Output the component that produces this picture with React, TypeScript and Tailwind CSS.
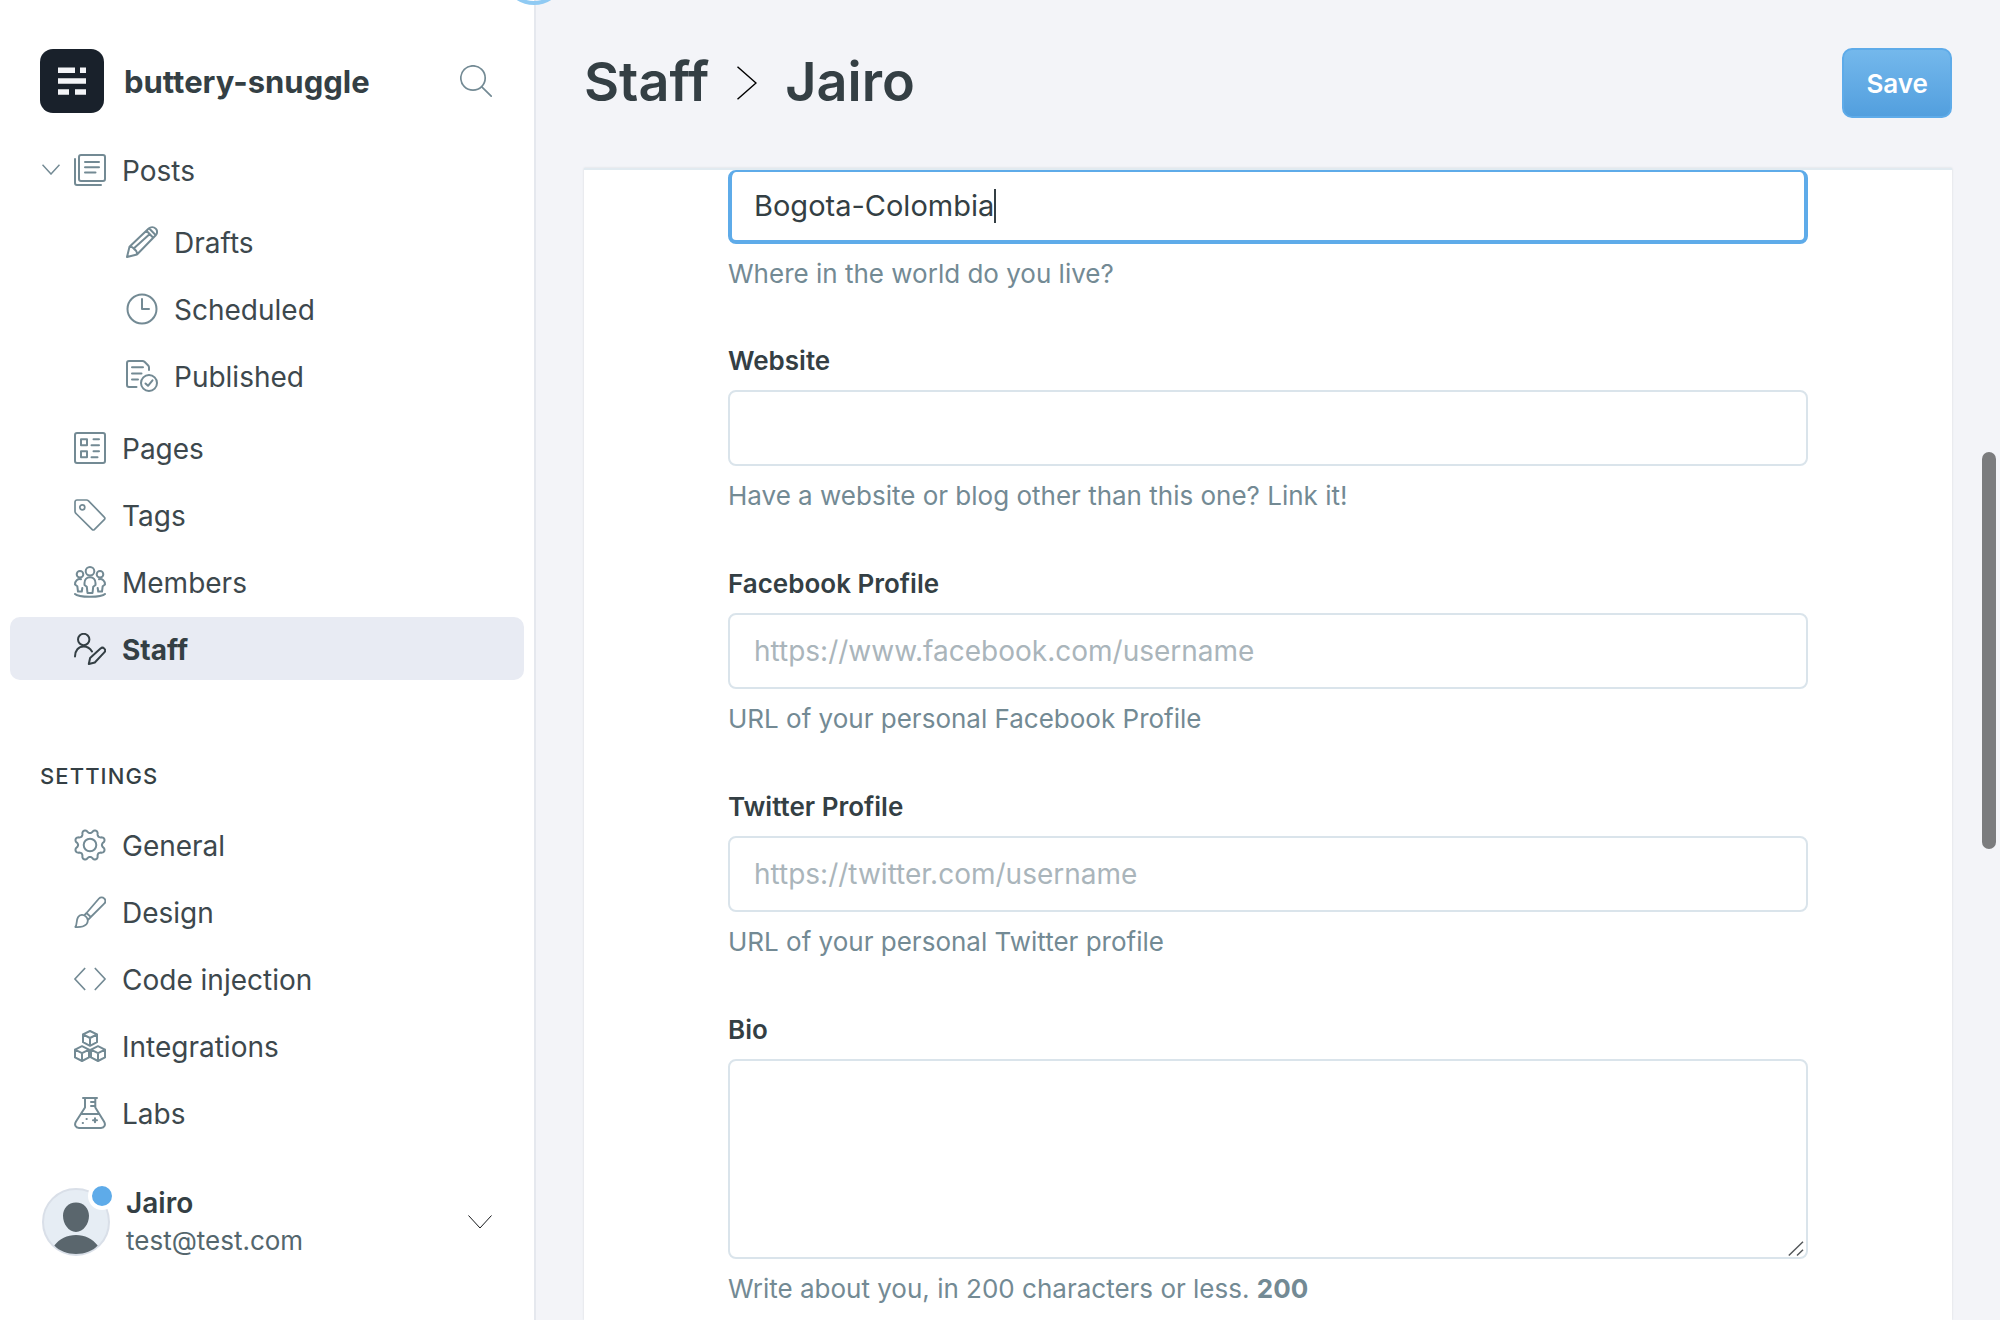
import React, { useState } from "react";

type IconProps = { className?: string; children: React.ReactNode; width?: number };

function Icon({ className = "text-[#738a94]", children, width = 2 }: IconProps) {
  return (
    <svg
      viewBox="0 0 32 32"
      aria-hidden="true"
      className={`size-8 shrink-0 ${className}`}
      fill="none"
      stroke="currentColor"
      strokeWidth={width}
      strokeLinecap="round"
      strokeLinejoin="round"
    >
      {children}
    </svg>
  );
}

const gearPath =
  Array.from({ length: 144 }, (_, i) => {
    const a = (i / 144) * Math.PI * 2;
    const wave = Math.cos(8 * (a - Math.PI / 8));
    const r = 13.7 + 1.8 * Math.sign(wave) * Math.pow(Math.abs(wave), 0.7);
    return `${i ? "L" : "M"}${(16 + r * Math.cos(a)).toFixed(2)} ${(16 + r * Math.sin(a)).toFixed(2)}`;
  }).join("") + "Z";

const cube = (x: number, y: number) =>
  `M${x} ${y}l7 3.4v7.8l-7 3.6l-7-3.6v-7.8zM${x - 7} ${y + 3.4}l7 3.6l7-3.6M${x} ${y + 7}v7.8`;

const icons = {
  posts: (
    <Icon>
      <rect x="5" y="1" width="26" height="26" rx="2" />
      <path d="M1 5v24a2 2 0 0 0 2 2h24M11 8h14M11 13.2h14M11 18.5h10.5" />
    </Icon>
  ),
  drafts: (
    <Icon>
      <path d="M1 31L3.5 20.8L22.7 2.6a5 5 0 0 1 7 0a4.6 4.6 0 0 1 0 6.6L11 28.5zM3.5 20.8c1.7 0 3.5.6 4.2 1.8c1.4.8 3.3 2.6 3.3 5.9M7.7 22.6L23.5 8.3M20.5 4.800l6.7 7M23.500 2.800l6.3 6.400" />
    </Icon>
  ),
  scheduled: (
    <Icon>
      <circle cx="16" cy="16" r="14.5" />
      <path d="M16 6v10h7" />
    </Icon>
  ),
  published: (
    <Icon>
      <path d="M10.5 27H3a2 2 0 0 1-2-2V3a2 2 0 0 1 2-2h13.5a3 3 0 0 1 2 .8l3.7 3.7a3 3 0 0 1 .8 2V10M6 7.3h11M6 13.5h9.5M6 19.5h6" />
      <circle cx="23" cy="23" r="8" />
      <path d="M19.5 23.5l2.5 2.3l4.5-5.5" />
    </Icon>
  ),
  pages: (
    <Icon>
      <rect x="1" y="1" width="30" height="30" rx="2" />
      <path d="M7 7.2h6v6H7zM7 19.2h6v6H7zM19.5 7.2H25M17.5 13.2H25M19.5 19.2H25M17.5 25.2H23.5" />
    </Icon>
  ),
  tags: (
    <Icon width={1.7}>
      <path d="M1 3a2 2 0 0 1 2-2h9.5a3 3 0 0 1 2 .8L30.5 18.3a1.4 1.4 0 0 1 0 2L20.3 30.6a1.4 1.4 0 0 1-2 0L2 14.5a3 3 0 0 1-1-2z" />
      <circle cx="8.3" cy="8.3" r="2.5" />
    </Icon>
  ),
  members: (
    <Icon>
      <circle cx="16" cy="5.3" r="4.3" />
      <circle cx="6" cy="8.3" r="3.3" />
      <circle cx="26" cy="8.3" r="3.3" />
      <path d="M16 11.3c-3.5 0-5.5 2.5-5.5 5.7v2l2.3 1.8l.7 6.2h5l.7-6.2l2.3-1.8v-2c0-3.2-2-5.7-5.5-5.7zM7 13.2c-3.5-.6-6 1.8-6 5.3l2.3 1.7l.7 5.3h3.8l.5-3.5M25 13.2c3.5-.6 6 1.8 6 5.3l-2.3 1.7l-.7 5.3h-3.8l-.5-3.5M1 28c3.5 3.7 26.5 3.7 30 0" />
    </Icon>
  ),
  staff: (
    <Icon className="text-[#343f44]">
      <circle cx="9.7" cy="6.5" r="5.7" />
      <path d="M1 23.5c0-6 3.5-10 8.7-10c3.3 0 6.3 1.800 8.3 5M14.8 31l1.3-6L26.5 15.6a2.7 2.7 0 0 1 3.8 0a2.7 2.7 0 0 1 0 3.8L20.8 29.5z" />
    </Icon>
  ),
  general: (
    <Icon>
      <circle cx="16" cy="16" r="6.3" />
      <path d={gearPath} />
    </Icon>
  ),
  design: (
    <Icon width={1.8}>
      <path d="M12.5 17L25 2.5a3.5 3.5 0 0 1 5.2 0a3.5 3.5 0 0 1 0 5.2L16.8 21M12.5 17l4.3 4M12.5 17l-2.3 2.3M16.8 21l-2.5 2.5M1.3 31c2-2 .7-6.5 2.7-9.7c2-3.3 5.5-3 7.7-1c2.3 2 3 5.4.6 8C9.7 30.8 5.500 31.3 1.3 31z" />
    </Icon>
  ),
  code: (
    <Icon width={1.7}>
      <path d="M10.7 5.5L.9 16l9.800 10.5M21.3 5.5L31.1 16l-9.800 10.5" />
    </Icon>
  ),
  integrations: (
    <Icon>
      <path d={cube(16, 1) + cube(8, 16.2) + cube(24, 16.2)} />
    </Icon>
  ),
  labs: (
    <Icon>
      <path d="M9 1h14M11 1v9.5L2 24.5c-2 3.2-.5 6.5 3 6.5h22c3.5 0 5-3.3 3-6.5L21.3 10.5V1M7 17h18M17 5h4M17 9h4M21 21.2v4M19 23.2h4M12.5 22h.3M8.7 26h.3" />
    </Icon>
  ),
};

function NavItem({
  icon,
  label,
  active = false,
  nested = false,
}: {
  icon: React.ReactNode;
  label: string;
  active?: boolean;
  nested?: boolean;
}) {
  return (
    <a
      href="#"
      aria-current={active ? "page" : undefined}
      className={`flex h-[63px] items-center gap-4 rounded-[10px] text-[28px] ${nested ? "pl-[116px]" : "pl-16"} ${
        active ? "bg-[#e8ebf3] font-bold text-[#343f44]" : "text-[#3d484d]"
      }`}
    >
      {icon}
      <span className="pt-0.5">{label}</span>
    </a>
  );
}

function Field({
  id,
  label,
  help,
  children,
}: {
  id: string;
  label: string;
  help: React.ReactNode;
  children: React.ReactNode;
}) {
  return (
    <div className="mb-[53px] flex flex-col">
      <label htmlFor={id} className="mb-[13px] text-[26px] leading-8 font-semibold text-[#343f44]">
        {label}
      </label>
      {children}
      <p id={`${id}-help`} className="mt-[11px] text-[26px] leading-[38px] text-[#738a94]">
        {help}
      </p>
    </div>
  );
}

const inputClass =
  "h-[76px] w-full rounded-lg border-2 border-[#dae4eb] bg-white px-6 text-[28px] text-[#343f44] outline-none placeholder:text-[#aab5bb]";

export default function App() {
  const [location, setLocation] = useState("Bogota-Colombia");

  return (
    <div className="relative flex h-screen overflow-hidden bg-[#f3f4f8] font-[Inter,'Liberation_Sans',sans-serif] text-[#343f44]">
      <aside className="flex w-[536px] shrink-0 flex-col border-r-2 border-[#e5e8ee] bg-white">
        <div className="mt-12 flex h-[66px] items-center pr-[42px] pl-10">
          <svg viewBox="0 0 64 64" aria-hidden="true" className="size-16 shrink-0">
            <rect width="64" height="64" rx="13" fill="#19212b" />
            <path
              d="M18 18.5h17v5.5h-17zM40 18.5h6v5.5h-6zM18 29.3h28v5.5h-28zM18 40.2h11v5.5h-11zM35 40.2h11v5.5h-11z"
              fill="#f4f5f8"
            />
          </svg>
          <span className="ml-5 pt-0.5 text-[31px] font-bold">buttery-snuggle</span>
          <button type="button" aria-label="Search" className="ml-auto">
            <Icon width={1.7}>
              <circle cx="13" cy="13" r="12.2" />
              <path d="M21.8 21.8L31.2 31.2" />
            </Icon>
          </button>
        </div>

        <nav aria-label="Main" className="mt-6 flex flex-col px-[10px]">
          <div className="relative flex flex-col">
            <button type="button" aria-label="Collapse posts" className="absolute top-[26px] left-8">
              <svg viewBox="0 0 18 11" aria-hidden="true" className="h-[11px] w-[18px]" fill="none" stroke="#738a94" strokeWidth="1.5">
                <path d="M.5 .7L9 10L17.5 .7" />
              </svg>
            </button>
            <NavItem icon={icons.posts} label="Posts" />
          </div>
          <div className="mt-[9px] flex flex-col gap-1">
            <NavItem nested icon={icons.drafts} label="Drafts" />
            <NavItem nested icon={icons.scheduled} label="Scheduled" />
            <NavItem nested icon={icons.published} label="Published" />
          </div>
          <div className="mt-[9px] flex flex-col gap-1">
            <NavItem icon={icons.pages} label="Pages" />
            <NavItem icon={icons.tags} label="Tags" />
            <NavItem icon={icons.members} label="Members" />
            <NavItem active icon={icons.staff} label="Staff" />
          </div>
          <h2 className="mt-20 mb-[21px] pl-[30px] text-[22px] leading-8 font-medium tracking-wider">SETTINGS</h2>
          <div className="flex flex-col gap-1">
            <NavItem icon={icons.general} label="General" />
            <NavItem icon={icons.design} label="Design" />
            <NavItem icon={icons.code} label="Code injection" />
            <NavItem icon={icons.integrations} label="Integrations" />
            <NavItem icon={icons.labs} label="Labs" />
          </div>
        </nav>

        <button type="button" className="mt-auto mb-[60px] flex items-center px-[42px] text-left">
          <span className="relative shrink-0">
            <svg viewBox="0 0 68 68" aria-hidden="true" className="size-[68px]">
              <circle cx="34" cy="34" r="33" fill="#e6edf4" stroke="#d9dfe8" strokeWidth="2" />
              <path
                d="M34 14.5c8 0 13 6 13 13.3c0 8-5.5 16.2-13 16.2s-13-8.2-13-16.2c0-7.3 5-13.3 13-13.3zM12.3 57.5c5-6.500 13-10.5 21.7-10.5s16.7 4 21.7 10.5c-5 5.5-13 8.5-21.7 8.5s-16.7-3-21.7-8.5z"
                fill="#5a666d"
              />
            </svg>
            <span className="absolute -top-[6px] -right-[6px] size-7 rounded-full border-4 border-white bg-[#5eabe9]" />
          </span>
          <span className="ml-4 flex flex-col">
            <span className="text-[28px] leading-[38px] font-semibold">Jairo</span>
            <span className="text-[26px] leading-[38px] text-[#54666d]">test@test.com</span>
          </span>
          <svg viewBox="0 0 24 14" aria-hidden="true" className="ml-auto h-[14px] w-6" fill="none" stroke="#15171a" strokeWidth="1">
            <path d="M.5 .5L12 13L23.5 .5" />
          </svg>
        </button>
      </aside>

      <main className="flex min-w-0 flex-1 flex-col px-12">
        <header className="flex h-[168px] shrink-0 items-center justify-between pb-0.5">
          <h1 className="flex items-center pb-1 text-[54px] font-semibold">
            <a href="#">Staff</a>
            <svg viewBox="0 0 20 34" aria-hidden="true" className="mx-7 mt-1 h-[34px] w-5" fill="none" stroke="#000" strokeWidth="1.5">
              <path d="M.5 .8L19 17L.5 33.2" />
            </svg>
            <span>Jairo</span>
          </h1>
          <button
            type="button"
            className="h-[70px] rounded-[10px] border-2 border-[#5eabe9] bg-linear-to-b from-[#74b8ec] to-[#529fde] px-[22px] text-[26px] font-semibold text-white"
          >
            Save
          </button>
        </header>

        <form
          onSubmit={(e) => e.preventDefault()}
          className="min-h-0 flex-1 overflow-hidden border-t-2 border-[#e1eaf0] bg-white px-36 shadow-[0_0_2px_#d5d9de]"
        >
          <div className="mb-[52px] flex flex-col">
            <div className="flex h-[74px] items-center rounded-lg border-4 border-t-2 border-[#5eabe9] bg-white px-[22px]">
              <input
                id="location"
                aria-label="Location"
                aria-describedby="location-help"
                value={location}
                onChange={(e) => setLocation(e.target.value)}
                className="field-sizing-content bg-transparent text-[29px] caret-transparent outline-none"
              />
              <span aria-hidden="true" className="h-[34px] w-[2px] bg-[#343f44]" />
            </div>
            <p id="location-help" className="mt-[11px] text-[26px] leading-[38px] text-[#738a94]">
              Where in the world do you live?
            </p>
          </div>
          <Field id="website" label="Website" help="Have a website or blog other than this one? Link it!">
            <input id="website" type="url" aria-describedby="website-help" className={inputClass} />
          </Field>
          <Field id="facebook" label="Facebook Profile" help="URL of your personal Facebook Profile">
            <input
              id="facebook"
              type="url"
              aria-describedby="facebook-help"
              placeholder="https://www.facebook.com/username"
              className={inputClass}
            />
          </Field>
          <Field id="twitter" label="Twitter Profile" help="URL of your personal Twitter profile">
            <input
              id="twitter"
              type="url"
              aria-describedby="twitter-help"
              placeholder="https://twitter.com/username"
              className={inputClass}
            />
          </Field>
          <Field
            id="bio"
            label="Bio"
            help={
              <>
                Write about you, in 200 characters or less. <strong className="font-bold">200</strong>
              </>
            }
          >
            <div className="relative flex">
              <textarea
                id="bio"
                aria-describedby="bio-help"
                className="h-[200px] w-full resize-none rounded-lg border-2 border-[#dae4eb] bg-white px-6 py-4 text-[28px] outline-none"
              />
              <svg
                viewBox="0 0 16 16"
                aria-hidden="true"
                className="pointer-events-none absolute right-1 bottom-[2px] size-4"
                fill="none"
                stroke="#55595c"
                strokeWidth="1.5"
              >
                <path d="M.8 14.5L15 .8M9 14.5L15 8.8" />
              </svg>
            </div>
          </Field>
        </form>
      </main>

      <div aria-hidden="true" className="absolute top-[452px] right-1 h-[397px] w-[14px] rounded-full bg-[#7b7c7e]" />
      <div aria-hidden="true" className="absolute -top-[59px] left-[502px] size-16 rounded-full border-4 border-[#8fcaf3]" />
    </div>
  );
}
